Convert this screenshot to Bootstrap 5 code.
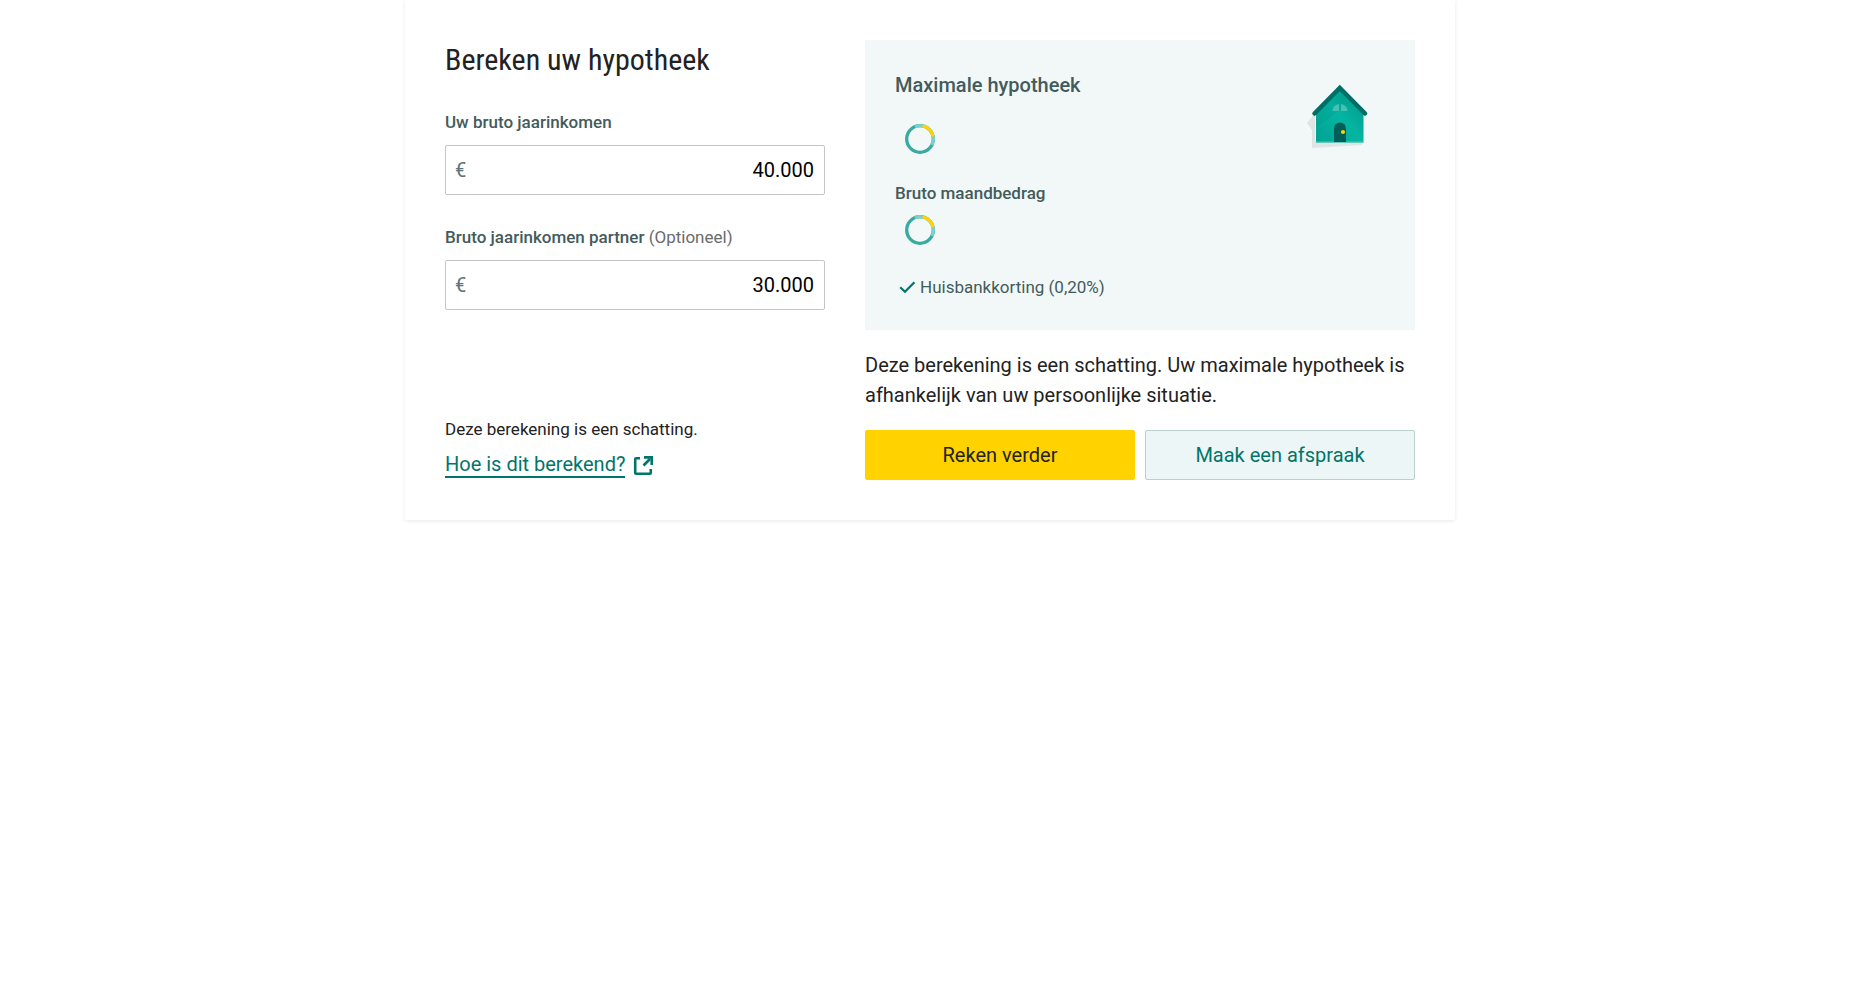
<!DOCTYPE html>
<html lang="nl">
<head>
<meta charset="utf-8">
<meta name="viewport" content="width=device-width, initial-scale=1">
<title>Bereken uw hypotheek</title>
<link href="https://cdn.jsdelivr.net/npm/bootstrap@5.3.0/dist/css/bootstrap.min.css" rel="stylesheet">
<style>
  body { font-family: Roboto, "Liberation Sans", sans-serif; font-size: 20px; line-height: 30px; color: #222; background: #fff; }
  .calc-wrap { max-width: 1050px; padding-bottom: 40px; }
  .calc-card { padding: 40px; border-radius: 0 0 2px 2px; box-shadow: 0 1px 4px rgba(0,0,0,.09); }
  .calc-cols { gap: 40px; }
  @media (min-width: 768px) { .calc-cols { grid-template-columns: 38fr 55fr; } }
  .calc-title { font-family: "Roboto Condensed", Roboto, sans-serif; font-size: 30px; line-height: 40px; font-weight: 400; margin-bottom: 30px; }
  .calc-label { display: block; font-size: 17px; line-height: 24px; font-weight: 500; color: #435b5b; margin-bottom: 11px; }
  .calc-label span { font-weight: 400; color: #6b6b6b; }
  .calc-field { height: 50px; border: 1px solid #c4c6c6; border-radius: 2px; padding: 0 10px 0 9px; margin-bottom: 30px; }
  .calc-field span { color: #5b7676; }
  .calc-field input { min-width: 0; border: 0; outline: 0; padding: 0; text-align: right; background: transparent; color: #000; }
  .calc-note { font-size: 17px; line-height: 24px; margin-bottom: 12px; }
  .calc-link { color: #00756b; text-decoration: none; border-bottom: 2px solid #00756b; line-height: 23px; }
  .calc-foot { padding-bottom: 2px; }
  .calc-panel { background: #f2f8f8; padding: 30px; color: #435b5b; min-height: 290px; }
  .calc-panel h3 { font-size: 20px; line-height: 30px; font-weight: 500; margin-bottom: 24px; }
  .calc-panel h4 { font-size: 17px; line-height: 24px; font-weight: 500; margin: 27px 0 10px; }
  .calc-spinner { display: block; margin-left: 10px; }
  .calc-check { font-size: 17px; line-height: 24px; margin-top: 30px; }
  .calc-house { margin-top: 10px; margin-right: 14px; }
  .calc-text { margin: 20px 0; }
  .calc-actions { gap: 10px; }
  .calc-btn { flex: 1 1 0; height: 50px; border-radius: 2px; font-size: 20px; line-height: 30px; padding: 0; }
  .calc-btn.main-action { --bs-btn-bg: #ffd200; --bs-btn-border-color: #ffd200; --bs-btn-color: #222; --bs-btn-hover-bg: #f2c700; }
  .calc-btn.other-action { --bs-btn-bg: #edf6f6; --bs-btn-border-color: #bccfcf; --bs-btn-color: #00756b; --bs-btn-hover-color: #00756b; --bs-btn-hover-bg: #deeeee; }
</style>
</head>
<body>
<svg class="d-none" aria-hidden="true">
  <symbol id="ring" viewBox="0 0 30 30">
    <g fill="none" stroke-width="3.3">
      <circle cx="15" cy="15" r="13.3" stroke="#38aba0"/>
      <path d="M10 2.700A13.300 13.300 0 0 1 26.900 21" stroke="#7fcfc8"/>
      <path d="M19 2.300A13.300 13.300 0 0 1 27.700 11" stroke="#ffd200" stroke-linecap="round"/>
    </g>
  </symbol>
</svg>
<main class="calc-wrap mx-auto">
  <div class="calc-card">
    <div class="d-grid calc-cols">
      <form class="d-flex flex-column">
        <h2 class="calc-title">Bereken uw hypotheek</h2>
        <label class="calc-label" for="income">Uw bruto jaarinkomen</label>
        <div class="calc-field d-flex align-items-center">
          <span>€</span><input class="flex-grow-1" id="income" type="text" inputmode="numeric" value="40.000">
        </div>
        <label class="calc-label" for="partner">Bruto jaarinkomen partner <span>(Optioneel)</span></label>
        <div class="calc-field d-flex align-items-center">
          <span>€</span><input class="flex-grow-1" id="partner" type="text" inputmode="numeric" value="30.000">
        </div>
        <div class="mt-auto calc-foot">
          <p class="calc-note">Deze berekening is een schatting.</p>
          <div class="d-flex align-items-center">
            <a class="calc-link" href="#">Hoe is dit berekend?</a>
            <svg class="ms-2" width="20" height="20" viewBox="0 0 20 20" fill="none" stroke="#00756b" stroke-width="2.6" aria-hidden="true"><path d="M7 2.200H3.200Q2.200 2.200 2.200 3.200V16.800Q2.200 17.800 3.200 17.800H16.800Q17.800 17.800 17.800 16.800V13"/><path d="M10.500 9.500L17 3"/><path d="M11 1.400H18.700V9"/></svg>
          </div>
        </div>
      </form>
      <section>
        <div class="calc-panel d-flex justify-content-between align-items-start">
          <div>
            <h3>Maximale hypotheek</h3>
            <svg class="calc-spinner" width="30" height="30"><use href="#ring"/></svg>
            <h4>Bruto maandbedrag</h4>
            <svg class="calc-spinner" width="30" height="30"><use href="#ring"/></svg>
            <div class="calc-check d-flex align-items-center">
              <svg class="ms-1 me-1" width="17" height="16" viewBox="0 0 17 16" fill="none" stroke="#00756b" stroke-width="2.2" aria-hidden="true"><path d="M1.200 8.200L6 12.800L15.400 3.200"/></svg>
              <span>Huisbankkorting (0,20%)</span>
            </div>
          </div>
          <svg class="calc-house" width="64" height="70" viewBox="0 0 64 70" aria-hidden="true">
            <defs><linearGradient id="wall" x1="0" y1="1" x2="1" y2="0"><stop offset="0" stop-color="#00a292"/><stop offset=".5" stop-color="#04b5a2"/><stop offset="1" stop-color="#009485"/></linearGradient></defs>
            <path d="M8 33L0 43L5 50V68L55 65V62L8 61Z" fill="#dfe4e4"/>
            <path d="M9 31.500L32.500 8L56.500 31.500V62.500H9Z" fill="url(#wall)"/>
            <path d="M32.500 8L45 21L9 48V31.500Z" fill="#00897c" opacity=".15"/>
            <path d="M9 62H56.500" stroke="#58c5b8" stroke-width="1"/>
            <path d="M7.500 33.500L32.800 8L58 33.500" fill="none" stroke="#006e66" stroke-width="4.500" stroke-linecap="round"/>
            <path d="M25.500 31A7 7 0 0 1 32 24V31ZM34 24A7 7 0 0 1 40.500 31H34Z" fill="#5cc8bc" opacity=".75"/>
            <path d="M27 62V48.500A6 6 0 0 1 39 48.500V62Z" fill="#005e58"/>
            <circle cx="36" cy="52" r="2.100" fill="#ffd200"/>
          </svg>
        </div>
        <p class="calc-text">Deze berekening is een schatting. Uw maximale hypotheek is afhankelijk van uw persoonlijke situatie.</p>
        <div class="d-flex calc-actions">
          <button type="button" class="btn calc-btn main-action">Reken verder</button>
          <button type="button" class="btn calc-btn other-action">Maak een afspraak</button>
        </div>
      </section>
    </div>
  </div>
</main>
<script src="https://cdn.jsdelivr.net/npm/bootstrap@5.3.0/dist/js/bootstrap.bundle.min.js"></script>
</body>
</html>
